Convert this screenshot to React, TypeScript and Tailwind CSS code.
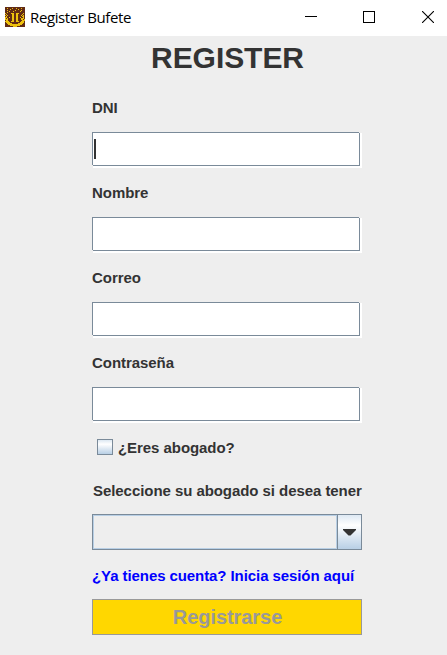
import React from "react";

const EMBLEM = [
  "....................",
  "..Y....Y...Y....Y...",
  ".....Y.......Y......",
  "..Y.......Y.....Y...",
  "....Y...Y......Y....",
  "..Y.................",
  "Y.....YYY..YYY....Y.",
  ".Y.....YY..YY....Y..",
  "Y.Y....YY..YY...Y.Y.",
  ".Y.....YY..YY....YY.",
  "YY..Y..YY..YY..Y..Y.",
  "Y.Y....YY..YY...YYY.",
  "YYY....YY..YY...YY.Y",
  ".YY....YY..YY....YYY",
  "YYYY..YYY..YYY..YYY.",
  ".YYYY..........YYYY.",
  "..YYYYY......YYYYY..",
  "...YYYYYYYYYYYYYY...",
  ".....YYYYYYYYYY.....",
  "........YYYY........",
];

function Emblem() {
  return (
    <svg width="20" height="20" viewBox="0 0 20 20" shapeRendering="crispEdges">
      <rect width="20" height="20" fill="#622b14" />
      {EMBLEM.flatMap((row, y) =>
        row.split("").map((c, x) =>
          c === "Y" ? <rect key={`${x}-${y}`} x={x} y={y} width="1" height="1" fill="#edc10c" /> : null
        )
      )}
    </svg>
  );
}

function TitleBar() {
  return (
    <header className="flex h-9 items-center bg-white pl-[5px] pr-[13px] font-normal">
      <div className="mt-[-2px]"><Emblem /></div>
      <span className="ml-[5px] mt-[-2px] whitespace-nowrap font-['Open_Sans','Noto_Sans',sans-serif] text-[15px] leading-5 tracking-[-0.38px] text-black">
        Register Bufete
      </span>
      <div className="ml-auto mt-[-2px] flex">
        <svg className="mr-[46px]" width="12" height="12" viewBox="0 0 12 12" shapeRendering="crispEdges">
          <path d="M0 5.5h12" stroke="#000" />
        </svg>
        <svg className="mr-[47px]" width="12" height="12" viewBox="0 0 12 12" shapeRendering="crispEdges">
          <rect x=".5" y=".5" width="11" height="11" fill="none" stroke="#000" />
        </svg>
        <svg width="12" height="12" viewBox="0 0 12 12">
          <path d="M0 0l12 12M12 0L0 12" stroke="#000" strokeWidth="1.1" />
        </svg>
      </div>
    </header>
  );
}

function Field({ label, focused = false }: { label: string; focused?: boolean }) {
  return (
    <div className="mb-[17px]">
      <div className="h-4 leading-4">{label}</div>
      <div className="relative mt-4 h-9 bg-white pb-0.5 pr-0.5">
        <div className="flex h-full border border-[#7a8a99] pl-px pt-1.5">
          {focused && <span className="h-5 w-0.5 bg-[#333]" />}
        </div>
        <span className="absolute right-0 top-0 h-px w-[3px] bg-[#eeeeee]" />
        <span className="absolute bottom-0 left-0 h-[3px] w-px bg-[#eeeeee]" />
      </div>
    </div>
  );
}

export default function App() {
  return (
    <div className="h-[655px] w-[447px] overflow-hidden bg-[#eeeeee] font-['Liberation_Sans',Arial,sans-serif] text-[15px] font-bold tracking-[-0.06px] text-[#333333]">
      <TitleBar />
      <h1 className="ml-[8px] h-[64px] pt-[4px] text-center text-[30px] leading-9">REGISTER</h1>
      <main className="ml-[92px] w-[270px] whitespace-nowrap">
        <Field label="DNI" focused />
        <Field label="Nombre" />
        <Field label="Correo" />
        <Field label="Contraseña" />

        <div className="flex h-4 items-start pl-[5px] leading-4">
          <span className="mt-[-1px] size-4 border border-[#7a8a99] bg-linear-to-b from-[#dce8f2] via-white via-30% to-[#b8cfe5]" />
          <span className="ml-[5px]">¿Eres abogado?</span>
        </div>

        <div className="mt-[27px] h-4 pl-px leading-4">Seleccione su abogado si desea tener</div>

        <div className="mt-[15px] flex h-9 border border-[#7a8a99]">
          <div className="flex-1 border border-[#b8cfe5]" />
          <div className="flex w-6 items-center justify-center border-l border-[#7a8a99] bg-linear-to-b from-[#dde8f3] via-white via-30% to-[#b8cfe5]">
            <svg width="13" height="7" viewBox="0 0 13 7" className="mt-px">
              <path d="M0 0h13v1L7.5 6.5h-2L0 1z" fill="#333" />
            </svg>
          </div>
        </div>

        <div className="mt-[18px] h-4 leading-4 tracking-[-0.08px] text-[#0000ff]">¿Ya tienes cuenta? Inicia sesión aquí</div>
        <button className="mt-[15px] block h-9 w-full border border-[#999999] bg-[#ffd700] pl-px text-center text-[20px] font-bold leading-[34px] text-[#999999]">
          Registrarse
        </button>
      </main>
    </div>
  );
}
